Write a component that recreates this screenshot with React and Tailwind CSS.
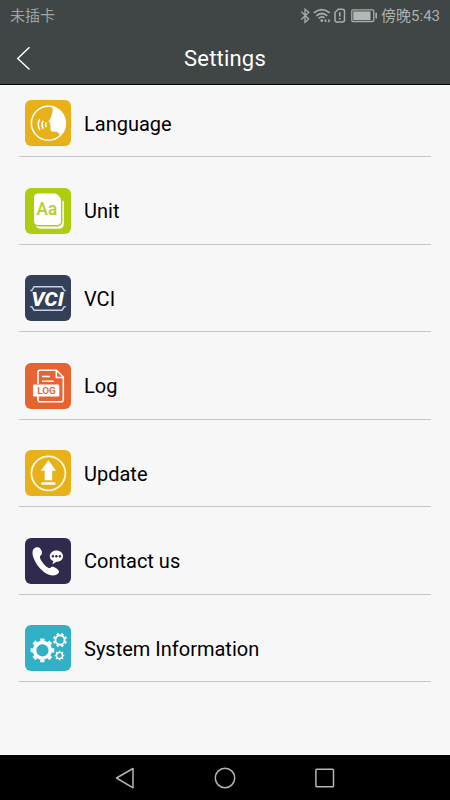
const LanguageIcon = () => (
  <svg viewBox="0 0 46 46" className="h-full w-full" fill="none" stroke="#fff">
    <circle cx="23.4" cy="23.3" r="17" strokeWidth="1.5" />
    <path
      d="M26.5 6.2C28.3 8.5 27.9 10.5 27.3 12.5C27 14 26.4 15 26.3 16.8L23.6 21.8L25.4 23L24.8 24.8L26 26.2L25 27.6L25.7 29C25.3 31 26.5 31.8 29 31.6C32 31.4 34 32.2 35.2 36A17.3 17.3 0 0 0 26.5 6.2Z"
      fill="#fff"
      stroke="none"
    />
    <path d="M14.8 19.2Q11.6 24.3 14.9 30M18.2 20.8Q16 24.5 18.2 28.6M21.2 22.3Q20 24.6 21.2 27.1" strokeWidth="1.6" />
  </svg>
);

const UnitIcon = () => (
  <svg viewBox="0 0 46 46" className="h-full w-full">
    <path d="M16 8H32L38.8 13.5V35.5Q38.8 40.8 33.5 40.8H16Q11 40.8 10 36Z" fill="#fff" />
    <path
      d="M13.5 4.7H30Q32 4.7 33.5 6.5L35.7 9.2Q36.7 10.7 36.7 12.5V33Q36.7 37.7 32 37.7H13.5Q8.3 37.7 8.3 33V9.7Q8.3 4.7 13.5 4.7Z"
      fill="#fff"
      stroke="#afcd10"
      strokeWidth="1.4"
    />
    <text
      x="11.6"
      y="27.2"
      fontFamily="Roboto, sans-serif"
      fontWeight="500"
      fontSize="18"
      textLength="20.6"
      lengthAdjust="spacingAndGlyphs"
      fill="#b5cf28"
    >
      Aa
    </text>
  </svg>
);

const VciIcon = () => (
  <svg viewBox="0 0 46 46" className="h-full w-full" fill="none">
    <path d="M5.3 15.5H6.8L9 11.8H37L39.2 15.5H40.7M5.3 31.7H6.8L9 35.2H37L39.2 31.7H40.7" stroke="#c8d2e6" strokeWidth="1.4" />
    <text
      x="6.2"
      y="30.7"
      fontFamily="Roboto, sans-serif"
      fontWeight="800"
      fontStyle="italic"
      fontSize="20.5"
      textLength="32.5"
      lengthAdjust="spacingAndGlyphs"
      fill="#fff"
    >
      VCI
    </text>
  </svg>
);

const LogIcon = () => (
  <svg viewBox="0 0 46 46" className="h-full w-full" fill="none" stroke="#fff" strokeWidth="1.6" strokeLinejoin="round">
    <path d="M13 21V9.5Q13 7.3 15 7.3H31.5L38.3 14V36.7Q38.3 38.7 36.3 38.7H15Q13 38.7 13 36.7V33" />
    <path d="M31.3 7.5V14.5H38" />
    <path d="M17 13.5H25M17 18.2H28.7" />
    <rect x="8" y="21.5" width="26.3" height="12" rx="1.2" fill="#fff" stroke="none" />
    <text
      x="12.2"
      y="30.8"
      fontFamily="Roboto, sans-serif"
      fontWeight="600"
      fontSize="9"
      textLength="18.6"
      lengthAdjust="spacingAndGlyphs"
      fill="#d8663a"
      stroke="none"
    >
      LOG
    </text>
  </svg>
);

const UpdateIcon = () => (
  <svg viewBox="0 0 46 46" className="h-full w-full">
    <circle cx="23.4" cy="23.3" r="17" fill="none" stroke="#fffbe0" strokeWidth="1.7" />
    <path d="M23.4 10.3L31 20.8H27.2V30.3H19.7V20.8H15.8ZM16.4 32.3H30.4V34.7H16.4Z" fill="#fff" />
  </svg>
);

const ContactIcon = () => (
  <svg viewBox="0 0 46 46" className="h-full w-full">
    <path
      d="M10.5 9.5C13 8.5 15.5 9.5 16.5 12.5C17.5 15 17 16.5 15.6 17.6C14.5 18.6 14.7 20 16 22.2C18 25.5 20.5 28.2 23.2 29.8C24.7 30.6 25.3 30 26.3 29C28.3 27.7 33 30.8 34 33.3C34.3 35.7 31 37.5 27.5 37.5C20.5 37.3 12.7 29.5 9 21C6.7 15.5 7 11 10.5 9.5Z"
      fill="#fff"
    />
    <path d="M31.3 12.5C35.3 12.5 38 15 38 18.2C38 21.5 35.2 23.7 31.5 23.7L27.3 26.2L28.4 23.2C26 22.2 24.8 20.5 24.8 18.2C24.8 15 27.6 12.5 31.3 12.5Z" fill="#fff" />
    <g fill="#302a4e">
      <circle cx="27.9" cy="18.3" r="1.2" />
      <circle cx="31.4" cy="18.3" r="1.2" />
      <circle cx="34.9" cy="18.3" r="1.2" />
    </g>
  </svg>
);

// ring plus a dashed ring outside it, each dash is a tooth
const Gear = ({ cx, cy, r, width, tooth, rotate }) => (
  <g transform={`rotate(${rotate} ${cx} ${cy})`} fill="none" stroke="#fff">
    <circle cx={cx} cy={cy} r={r} strokeWidth={width} />
    <circle cx={cx} cy={cy} r={r + width / 2 + tooth / 2 - 0.1} strokeWidth={tooth} pathLength="80" strokeDasharray="5 5" />
  </g>
);

const SystemIcon = () => (
  <svg viewBox="0 0 46 46" className="h-full w-full">
    <Gear cx={17.4} cy={25.3} r={7.9} width={3.6} tooth={2.3} rotate={-11} />
    <Gear cx={35} cy={15} r={4.6} width={1.9} tooth={1.6} rotate={12} />
    <Gear cx={34.5} cy={30.5} r={3} width={1.3} tooth={1.2} rotate={-11} />
  </svg>
);

const items = [
  { label: 'Language', Icon: LanguageIcon, color: 'bg-[#e8b11a]' },
  { label: 'Unit', Icon: UnitIcon, color: 'bg-[#afcd10]' },
  { label: 'VCI', Icon: VciIcon, color: 'bg-[#343f58]' },
  { label: 'Log', Icon: LogIcon, color: 'bg-[#e66332]' },
  { label: 'Update', Icon: UpdateIcon, color: 'bg-[#e8b11a]' },
  { label: 'Contact us', Icon: ContactIcon, color: 'bg-[#302a4e]' },
  { label: 'System Information', Icon: SystemIcon, color: 'bg-[#31b0c6]' },
];

const StatusIcons = () => (
  <svg width="78" height="18" viewBox="300 6.7 78 18" fill="none" stroke="#a9adac" strokeWidth="1.3">
    {/* bluetooth */}
    <path d="M301.3 11.3L308.7 18.7L305 22V8.8L308.7 12L301.3 19.2" />
    {/* wifi */}
    <path d="M313.8 12.6Q321.8 6 329.7 12.6M316.3 15.5Q321.8 10.9 327.3 15.5M318.7 18Q321.8 15.6 324.5 17.6" strokeWidth="1.7" />
    <circle cx="321.8" cy="20.3" r="1.4" fill="#a9adac" stroke="none" />
    <path d="M324 20.5L326.3 18.5V22.5ZM330.5 20.5L328.2 18.5V22.5Z" fill="#a9adac" stroke="none" />
    {/* sim */}
    <path d="M338.2 9H342.5Q344.5 9 344.5 11V19.7Q344.5 21.6 342.5 21.6H336.8Q335 21.6 335 19.7V12.3Z" strokeWidth="1.5" />
    <path d="M339.8 12V16.3M339.8 17.6V19.3" strokeWidth="1.7" />
    {/* battery */}
    <rect x="351.8" y="9.6" width="22" height="11.6" rx="1.2" />
    <rect x="353.3" y="11.1" width="17.2" height="8.6" fill="#b4b8b7" stroke="none" />
    <path d="M376.2 12.5V18.2" strokeWidth="1.6" />
  </svg>
);

const App = () => {
  return (
    <div className="flex h-[800px] w-[450px] flex-col overflow-hidden bg-[#f7f7f7] font-['Roboto','Noto_Sans_CJK_SC',sans-serif]">
      <header className="h-[85px] shrink-0 border-b border-black bg-[#404545]">
        <div className="flex h-8 items-center justify-between px-[10px] text-[15px] text-[#a0a4a3]">
          <span>未插卡</span>
          <div className="flex items-center gap-[3px]">
            <StatusIcons />
            <span className="text-[#acb0af]">傍晚5:43</span>
          </div>
        </div>
        <div className="grid h-[53px] grid-cols-[60px_1fr_60px] items-center">
          <button className="pl-4" aria-label="Back">
            <svg width="16" height="24" viewBox="0 0 16 24" fill="none" stroke="#fff" strokeWidth="1.4">
              <path d="M13.5 0.2L1.7 11.4L13.5 22.4" />
            </svg>
          </button>
          <h1 className="text-center text-[22px] leading-none tracking-[0.2px] text-white">Settings</h1>
        </div>
      </header>

      <main className="-mt-[15.5px] flex-1 px-[19px]">
        {items.map(({ label, Icon, color }) => (
          <div key={label} className="flex h-[87.5px] items-end gap-[13px] border-b border-[#c6c6c8] pb-[10px] pl-[6px]">
            <div className={`h-[46px] w-[46px] shrink-0 overflow-hidden rounded-[6px] ${color}`}>
              <Icon />
            </div>
            <span className="flex h-[46px] items-center pt-[1.5px] text-[20px] text-black">{label}</span>
          </div>
        ))}
      </main>

      <nav className="flex h-[45px] shrink-0 items-center justify-center gap-[76px] bg-black">
        <svg width="24" height="24" viewBox="0 0 24 24" fill="none" stroke="#b5b5b5" strokeWidth="1.5" strokeLinejoin="round">
          <path d="M3.5 12L20 2.5V21.8Z" />
        </svg>
        <svg width="24" height="24" viewBox="0 0 24 24" fill="none" stroke="#b5b5b5" strokeWidth="1.5">
          <circle cx="12" cy="12" r="9.7" />
        </svg>
        <svg width="24" height="24" viewBox="0 0 24 24" fill="none" stroke="#b5b5b5" strokeWidth="1.5">
          <rect x="2.9" y="3.3" width="17.6" height="17.4" rx="0.8" />
        </svg>
      </nav>
    </div>
  );
};

export default App;
